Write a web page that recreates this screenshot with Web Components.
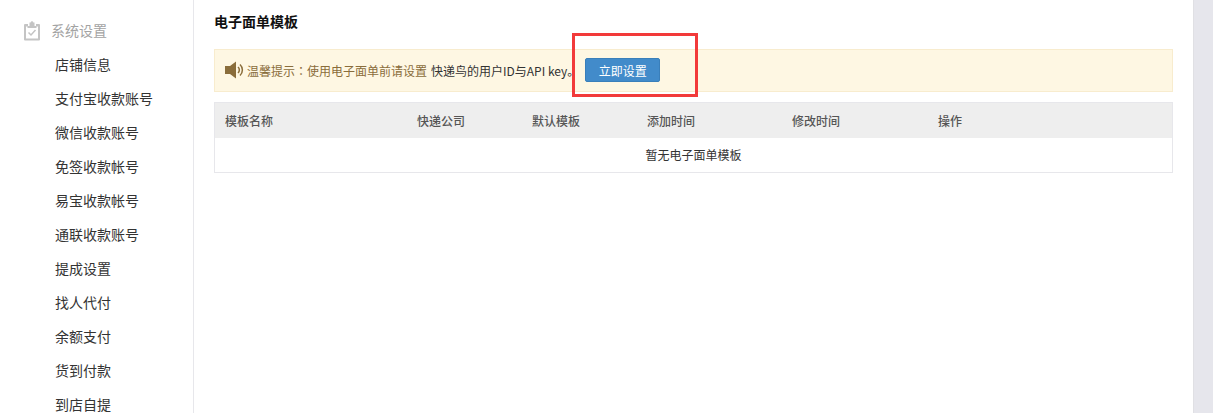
<!DOCTYPE html>
<html>
<head>
<meta charset="utf-8">
<title>电子面单模板</title>
<style>
  html, body { margin: 0; height: 100%; overflow: hidden; background: #fff; }
  body { font-family: "Noto Sans CJK SC", "Liberation Sans", sans-serif; }
  app-shell { height: 413px; }
</style>
</head>
<body>
<app-shell>
  <side-menu slot="side" title-text="系统设置" items="店铺信息,支付宝收款账号,微信收款账号,免签收款帐号,易宝收款帐号,通联收款账号,提成设置,找人代付,余额支付,货到付款,到店自提"></side-menu>
  <template-page></template-page>
</app-shell>

<script>
class AppShell extends HTMLElement {
  constructor() {
    super();
    this.attachShadow({ mode: 'open' }).innerHTML = `
      <style>
        :host { display: flex; overflow: hidden; }
        .side { display: block; flex: none; width: 193px; border-right: 1px solid #e7e7eb; overflow: hidden; }
        .main { flex: 1; min-width: 0; }
        .track { flex: none; width: 20px; background: #e6e6ec; border-left: 1px solid #e0e0e4; box-sizing: border-box; }
      </style>
      <div class="side"><slot name="side"></slot></div>
      <div class="main"><slot></slot></div>
      <div class="track"></div>
    `;
  }
}
customElements.define("app-shell", AppShell);

class SideMenu extends HTMLElement {
  constructor() {
    super();
    this.attachShadow({ mode: 'open' });
  }
  connectedCallback() {
    let items = this.getAttribute("items").split(",")
    let rows = items.map(i => `<div class="item">${i}</div>`).join("")
    this.shadowRoot.innerHTML = `
      <style>
        :host { display: block; font-size: 14px; color: #333; padding-top: 13px; }
        .head { display: flex; align-items: center; gap: 10px; height: 34px; padding-left: 23px; color: #a3a3a3; }
        .head svg { width: 18px; height: 20px; flex: none; position: relative; top: 1px; }
        .item { height: 34px; line-height: 34px; padding-left: 55px; white-space: nowrap; }
      </style>
      <div class="head">
        <svg viewBox="0 0 18 20">
          <path fill="#c4c4c4" d="M2 3h3v2h8V3h3a1 1 0 0 1 1 1v14.500a1 1 0 0 1-1 1H2a1 1 0 0 1-1-1V4a1 1 0 0 1 1-1zm1 2.500V17.500h12V5.500h-1.500V7h-9V5.500z"/>
          <path fill="#c4c4c4" d="M6.500 1.500h1.200a1.300 1.300 0 0 1 2.600 0h1.200V5h-5z"/>
          <path fill="none" stroke="#c4c4c4" stroke-width="1.500" d="M5.500 11.500l2.500 2.500 4.500-5"/>
        </svg>
        <span>${this.getAttribute("title-text")}</span>
      </div>
      ${rows}
    `;
  }
}
customElements.define("side-menu", SideMenu);

class NoticeBar extends HTMLElement {
  constructor() {
    super();
    this.attachShadow({ mode: 'open' }).innerHTML = `
      <style>
        :host { display: flex; align-items: center; position: relative; box-sizing: border-box; height: 43px; margin-top: 18px; padding-left: 10px; background: #fef7e3; border: 1px solid #f8ecce; font-size: 12px; color: #8a6d3b; white-space: nowrap; }
        svg { width: 20px; height: 18px; flex: none; margin-right: 2px; margin-top: -2px; }
        .colon { font-family: "Noto Sans CJK TC", sans-serif; }
        .dark { color: #333; margin-left: 4px; }
        button { margin-left: 6px; margin-top: -1px; width: 75px; height: 24px; padding: 0; background: #428bca; border: 1px solid #3a7fba; border-radius: 2px; color: #fff; font: inherit; font-size: 12px; }
        .mark { position: absolute; left: 357px; top: -17px; width: 126px; height: 64px; box-sizing: border-box; border: 3px solid #f23a3a; }
      </style>
      <svg viewBox="0 0 20 18">
        <path fill="#8a6d3b" d="M0 5h5L11 .5v17L5 13H0z"/>
        <path fill="none" stroke="#8a6d3b" stroke-width="1.500" d="M13 6a4 4 0 0 1 0 6M15 3.500a7.500 7.500 0 0 1 0 11"/>
      </svg>
      <span>温馨提示<span class="colon">：</span>使用电子面单前请设置</span><span class="dark">快递鸟的用户ID与API key。</span>
      <button>立即设置</button>
      <div class="mark"></div>
    `;
  }
}
customElements.define("notice-bar", NoticeBar);

class TemplateTable extends HTMLElement {
  constructor() {
    super();
    this.attachShadow({ mode: 'open' }).innerHTML = `
      <style>
        :host { display: block; margin-top: 10px; border: 1px solid #e7e7eb; font-size: 12px; color: #333; }
        .head { display: grid; grid-template-columns: 192px 115px 115px 145px 146px 1fr; height: 35px; line-height: 35px; background: #eee; color: #555; font-weight: 500; }
        .head div { padding-left: 10px; }
        .empty { height: 34px; line-height: 33px; text-align: center; }
      </style>
      <div class="head">
        <div>模板名称</div><div>快递公司</div><div>默认模板</div><div>添加时间</div><div>修改时间</div><div>操作</div>
      </div>
      <div class="empty">暂无电子面单模板</div>
    `;
  }
}
customElements.define("template-table", TemplateTable);

class TemplatePage extends HTMLElement {
  constructor() {
    super();
    this.attachShadow({ mode: 'open' }).innerHTML = `
      <style>
        :host { display: block; padding: 13px 20px 0; }
        h1 { margin: 0; height: 18px; line-height: 16px; font-size: 14px; font-weight: 700; color: #111; }
      </style>
      <h1>电子面单模板</h1>
      <notice-bar></notice-bar>
      <template-table></template-table>
    `;
  }
}
customElements.define("template-page", TemplatePage);
</script>
</body>
</html>
